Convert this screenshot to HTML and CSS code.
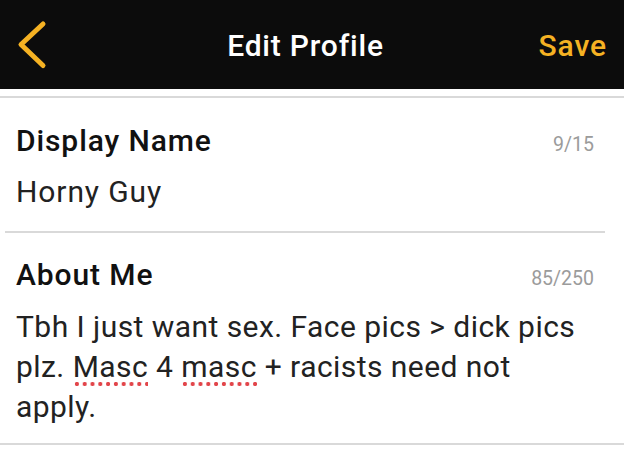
FILE: index.html
```html
<!DOCTYPE html>
<html>
<head>
<meta charset="utf-8">
<link rel="stylesheet" href="styles.css">
</head>
<body>
<header class="topbar">
  <div class="back">
    <svg width="34" height="50" viewBox="0 0 34 50"><polyline points="27,4 5,24.5 27,45.5" fill="none" stroke="#f5b223" stroke-width="5" stroke-linecap="round" stroke-linejoin="round"/></svg>
  </div>
  <h1 class="title">Edit Profile</h1>
  <div class="save">Save</div>
</header>
<div class="rule top-rule"></div>
<section class="field name">
  <div class="field-head"><span class="label">Display Name</span><span class="count">9/15</span></div>
  <div class="value">Horny Guy</div>
</section>
<div class="rule inset"></div>
<section class="field about">
  <div class="field-head"><span class="label">About Me</span><span class="count">85/250</span></div>
  <div class="value multiline">Tbh I just want sex. Face pics &gt; dick pics plz. <span class="spell">Masc</span> 4 <span class="spell">masc</span> + racists need not apply.</div>
</section>
<div class="rule"></div>
</body>
</html>
```
FILE: styles.css
```css
* { box-sizing: border-box; }
html, body { margin: 0; padding: 0; background: #fff; }
body {
  font-family: Roboto, "Noto Sans", sans-serif;
  color: #1d1d1d;
  width: 624px;
  height: 453px;
  overflow: hidden;
}
.topbar {
  height: 89px;
  background: #0c0c0c;
  display: grid;
  grid-template-columns: 1fr auto 1fr;
  align-items: center;
  padding: 0 17px 0 16px;
}
.back { display: flex; align-items: center; }
.back svg { display: block; }
.title {
  margin: 0 12px 0 0;
  padding-top: 2px;
  font-size: 30px;
  line-height: 36px;
  font-weight: 500;
  color: #fff;
  letter-spacing: 0.8px;
}
.save {
  justify-self: end;
  padding-top: 2px;
  color: #f5b223;
  font-size: 30px;
  line-height: 36px;
  font-weight: 500;
  letter-spacing: 0.9px;
}
.rule { height: 2px; background: #d9d9d9; }
.top-rule { margin-top: 7px; }
.rule.inset { margin: 0 19px 0 5px; }
.field { padding: 0 30px 0 16px; }
.field-head { display: flex; justify-content: space-between; align-items: baseline; }
.label {
  font-size: 30px;
  line-height: 36px;
  font-weight: 500;
  color: #111;
  letter-spacing: 0.9px;
}
.count { font-size: 19.5px; color: #9b9b9b; }
.value {
  font-size: 30px;
  line-height: 36px;
  color: #222;
  letter-spacing: 0.9px;
}
.name { padding-top: 25px; padding-bottom: 21px; }
.name .value { margin-top: 15px; }
.about { padding-top: 24px; padding-bottom: 16px; }
.multiline { line-height: 40px; margin-top: 14px; letter-spacing: 0.45px; margin-right: -2px; }
.spell {
  padding-bottom: 3px;
  background-image: radial-gradient(circle at center, #e2454a 1.9px, transparent 2.3px);
  background-size: 7.8px 6px;
  background-repeat: repeat-x;
  background-position: 0 100%;
}
```
